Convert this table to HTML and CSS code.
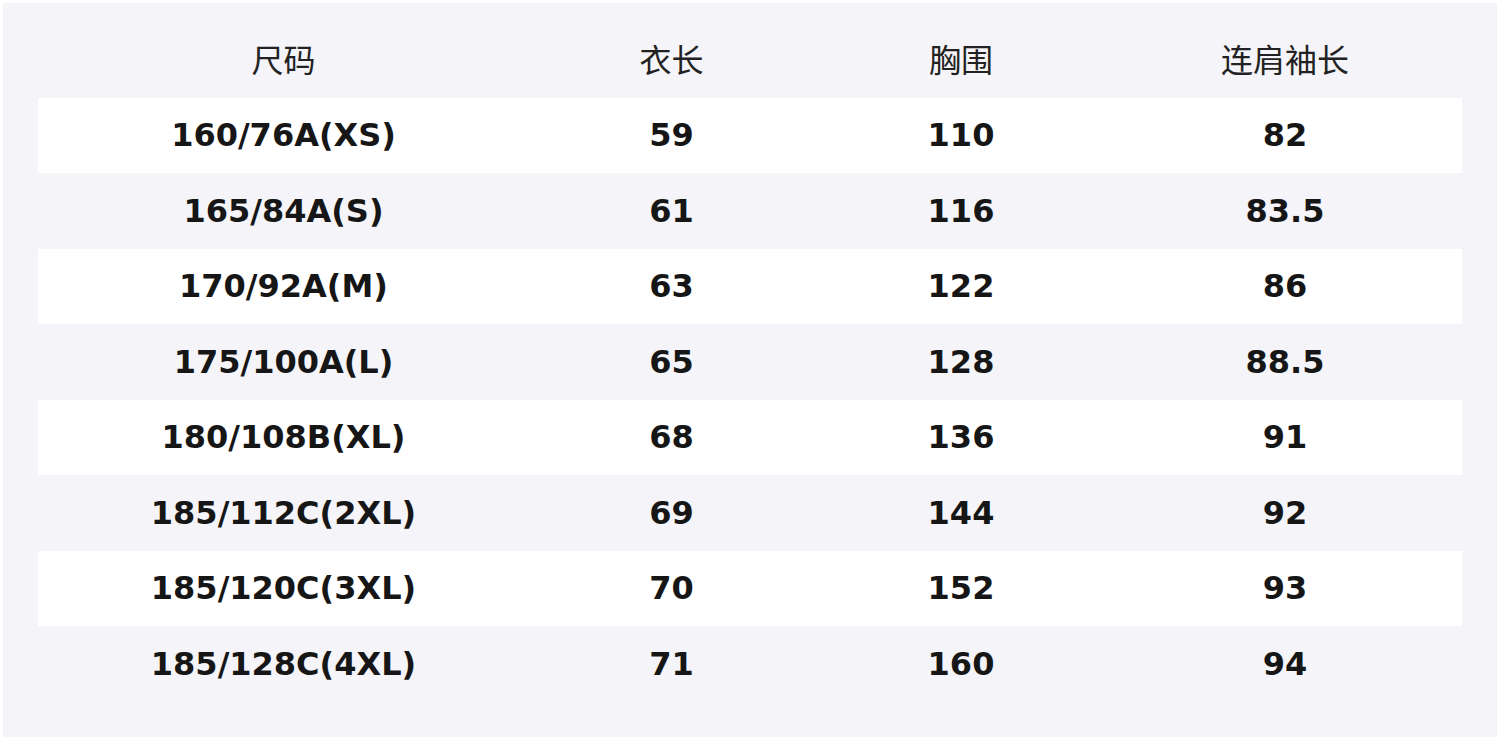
FILE: index.html
```html
<!DOCTYPE html>
<html lang="zh">
<head>
<meta charset="utf-8">
<title>尺码表</title>
<link rel="stylesheet" href="styles.css">
</head>
<body>
<div class="panel">
  <table class="size-table">
    <colgroup>
      <col class="c1"><col class="c2"><col class="c3"><col class="c4">
    </colgroup>
    <thead>
      <tr><th>尺码</th><th>衣长</th><th>胸围</th><th>连肩袖长</th></tr>
    </thead>
    <tbody>
      <tr><td>160/76A(XS)</td><td>59</td><td>110</td><td>82</td></tr>
      <tr><td>165/84A(S)</td><td>61</td><td>116</td><td>83.5</td></tr>
      <tr><td>170/92A(M)</td><td>63</td><td>122</td><td>86</td></tr>
      <tr><td>175/100A(L)</td><td>65</td><td>128</td><td>88.5</td></tr>
      <tr><td>180/108B(XL)</td><td>68</td><td>136</td><td>91</td></tr>
      <tr><td>185/112C(2XL)</td><td>69</td><td>144</td><td>92</td></tr>
      <tr><td>185/120C(3XL)</td><td>70</td><td>152</td><td>93</td></tr>
      <tr><td>185/128C(4XL)</td><td>71</td><td>160</td><td>94</td></tr>
    </tbody>
  </table>
</div>
</body>
</html>
```
FILE: styles.css
```css
html, body {
  margin: 0;
  padding: 0;
  background: #ffffff;
}
body {
  padding: 3px;
  box-sizing: border-box;
  width: 1500px;
  height: 740px;
}
.panel {
  background: #f4f4f9;
  height: 734px;
  box-sizing: border-box;
  padding: 19px 35px 0 35px;
}
.size-table {
  border-collapse: collapse;
  table-layout: fixed;
  width: 1424px;
  color: #161616;
}
.c1 { width: 491px; }
.c2 { width: 285px; }
.c3 { width: 294px; }
.c4 { width: 354px; }
.size-table th,
.size-table td {
  padding: 0;
  text-align: center;
  vertical-align: middle;
  height: 75.5px;
}
.size-table th {
  font-family: "Noto Sans CJK SC", "DejaVu Sans", sans-serif;
  font-weight: 400;
  font-size: 32px;
  color: #222222;
  padding-bottom: 4px;
  box-sizing: border-box;
}
.size-table td {
  font-family: "DejaVu Sans", "Noto Sans CJK SC", sans-serif;
  font-weight: 700;
  font-size: 32px;
}
.size-table tbody tr:nth-child(odd) {
  background: #ffffff;
}
```
